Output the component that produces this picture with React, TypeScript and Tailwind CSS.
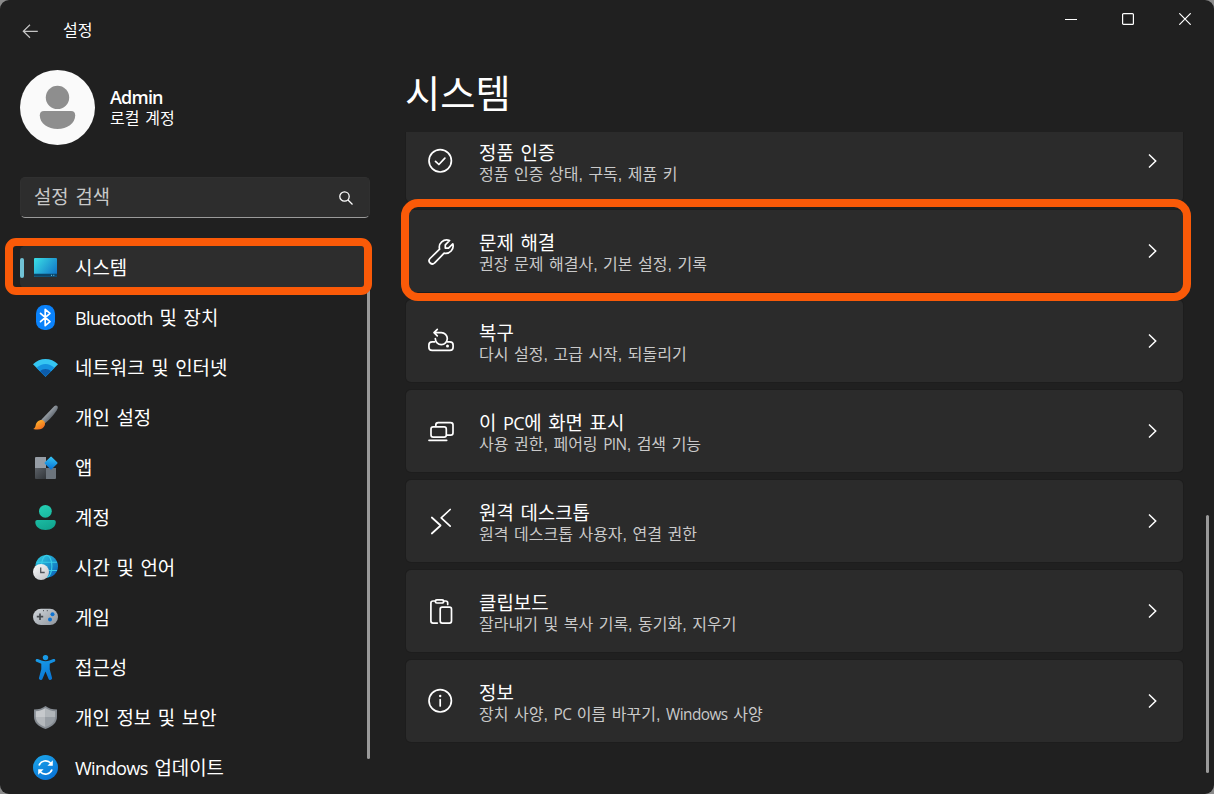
import type { ReactNode } from 'react';
import clsx from 'clsx';

interface NavItem {
  label: string;
  icon: ReactNode;
  active?: boolean;
}

interface SettingItem {
  title: string;
  description: string;
  icon: ReactNode;
  highlighted?: boolean;
}

// Latin letters run wide next to Hangul, so they get their own font and tracking
const MixedText = ({ children }: { children: string }) => (
  <>
    {children.split(/([A-Za-z]+)/).map((part, index) =>
      /^[A-Za-z]+$/.test(part) ? (
        <span
          key={index}
          className="font-['Open_Sans','Noto_Sans',sans-serif] text-[0.96em] leading-none tracking-[-0.034em]"
        >
          {part}
        </span>
      ) : (
        part
      )
    )}
  </>
);

const NavIcon = ({ children }: { children: ReactNode }) => (
  <svg className="w-[27px] h-[27px] shrink-0" viewBox="0 0 27 27" fill="none">
    {children}
  </svg>
);

const LineIcon = ({ children }: { children: ReactNode }) => (
  <svg
    className="w-[30px] h-[30px] shrink-0"
    viewBox="0 0 30 30"
    fill="none"
    stroke="#fff"
    strokeWidth="1.7"
    strokeLinecap="round"
    strokeLinejoin="round"
  >
    {children}
  </svg>
);

const navItems: NavItem[] = [
  {
    label: '시스템',
    active: true,
    icon: (
      <NavIcon>
        <defs>
          <linearGradient id="screen" x1="2" y1="4" x2="25" y2="22" gradientUnits="userSpaceOnUse">
            <stop stopColor="#3be0e6" />
            <stop offset="1" stopColor="#0f6fc5" />
          </linearGradient>
        </defs>
        <rect x="2" y="4" width="23" height="18.7" rx="1" fill="url(#screen)" />
        <path d="M2 19.8h23v2a1 1 0 0 1-1 1H3a1 1 0 0 1-1-1z" fill="#0b4467" />
        <path d="M19 21.3h1M21.3 21.3h1" stroke="#6fd0ef" />
      </NavIcon>
    )
  },
  {
    label: 'Bluetooth 및 장치',
    icon: (
      <NavIcon>
        <rect x="4" y="1" width="19" height="25" rx="8.5" fill="#0a82fb" />
        <path d="M8.500 9.300l9.500 8.400-4.800 4V5.300l4.800 4-9.500 8.400" stroke="#fff" strokeWidth="1.7" strokeLinejoin="round" strokeLinecap="round" />
      </NavIcon>
    )
  },
  {
    label: '네트워크 및 인터넷',
    icon: (
      <NavIcon>
        <path d="M1 10.300C8 3.300 19 3.300 26 10.300L13.500 22.700z" fill="#35c6f2" />
        <path d="M4.600 13.900C9.800 8.700 17.200 8.700 22.400 13.900L13.500 22.700z" fill="#1492df" />
        <path d="M8 17.300C11 14.300 16 14.300 19 17.300L13.500 22.700z" fill="#0c5cab" />
      </NavIcon>
    )
  },
  {
    label: '개인 설정',
    icon: (
      <NavIcon>
        <defs>
          <linearGradient id="handle" x1="12" y1="8" x2="20" y2="15" gradientUnits="userSpaceOnUse">
            <stop stopColor="#b4bac0" />
            <stop offset="1" stopColor="#59616a" />
          </linearGradient>
          <linearGradient id="bristle" x1="5" y1="16" x2="11" y2="26" gradientUnits="userSpaceOnUse">
            <stop stopColor="#ffb82e" />
            <stop offset="1" stopColor="#ee611a" />
          </linearGradient>
        </defs>
        <path d="M9.300 15.800L22.200 2.200C24 .5 26.600 2 25.600 4.500 23.800 8.600 18 15.200 12.800 19.600z" fill="url(#handle)" />
        <path d="M8 16.300c2.800-1.200 6 1.600 4.800 4.900C11.400 25 7.500 26.400 1.200 25c2.600-1 2-3.200 3-5.400.7-1.700 2-2.700 3.800-3.300z" fill="url(#bristle)" />
      </NavIcon>
    )
  },
  {
    label: '앱',
    icon: (
      <NavIcon>
        <defs>
          <linearGradient id="diamond" x1="15" y1="4" x2="23" y2="14" gradientUnits="userSpaceOnUse">
            <stop stopColor="#35c5f5" />
            <stop offset="1" stopColor="#0872d4" />
          </linearGradient>
          <linearGradient id="tile" x1="3" y1="14" x2="13" y2="25" gradientUnits="userSpaceOnUse">
            <stop stopColor="#5b6066" />
            <stop offset="1" stopColor="#34383c" />
          </linearGradient>
        </defs>
        <path d="M4 3h10v11H3V4a1 1 0 0 1 1-1z" fill="#969da5" />
        <path d="M3 14h11v11H4a1 1 0 0 1-1-1z" fill="url(#tile)" />
        <path d="M14 14h10v10a1 1 0 0 1-1 1h-9z" fill="#6c747c" />
        <rect x="14.2" y="4.2" width="9.7" height="9.7" rx="1" transform="rotate(45 19.05 9.05)" fill="url(#diamond)" />
      </NavIcon>
    )
  },
  {
    label: '계정',
    icon: (
      <NavIcon>
        <defs>
          <linearGradient id="person" x1="8" y1="1" x2="18" y2="26" gradientUnits="userSpaceOnUse">
            <stop stopColor="#25d0b5" />
            <stop offset="1" stopColor="#10a38d" />
          </linearGradient>
        </defs>
        <circle cx="13.4" cy="7.3" r="6.4" fill="url(#person)" />
        <path d="M5.200 16h16.600c1.200 0 2 .8 2 2 0 4.800-4.500 8-10.300 8S3.300 22.800 3.300 18c0-1.200.8-2 1.900-2z" fill="url(#person)" />
      </NavIcon>
    )
  },
  {
    label: '시간 및 언어',
    icon: (
      <NavIcon>
        <defs>
          <linearGradient id="globe" x1="7" y1="3" x2="24" y2="22" gradientUnits="userSpaceOnUse">
            <stop stopColor="#2dc3dc" />
            <stop offset="1" stopColor="#0b65bd" />
          </linearGradient>
          <linearGradient id="clock" x1="3" y1="11" x2="14" y2="26" gradientUnits="userSpaceOnUse">
            <stop stopColor="#f7f7f8" />
            <stop offset="1" stopColor="#c3c5c9" />
          </linearGradient>
        </defs>
        <circle cx="14.7" cy="12.3" r="11.3" fill="url(#globe)" />
        <path d="M4.500 8.300h20.500M4.500 16.500h20.500" stroke="#39cde8" strokeWidth="1.1" />
        <ellipse cx="14.7" cy="12.3" rx="5.2" ry="11" stroke="#39cde8" strokeWidth="1.1" />
        <circle cx="9" cy="18" r="8" fill="url(#clock)" />
        <path d="M8.700 13.500v5h4" stroke="#50545a" strokeWidth="1.3" />
      </NavIcon>
    )
  },
  {
    label: '게임',
    icon: (
      <NavIcon>
        <defs>
          <linearGradient id="pad" x1="5" y1="5" x2="18" y2="23" gradientUnits="userSpaceOnUse">
            <stop stopColor="#ccd1d6" />
            <stop offset="1" stopColor="#959ba2" />
          </linearGradient>
        </defs>
        <rect x="1" y="4.8" width="25" height="16.3" rx="8" fill="url(#pad)" />
        <path d="M8 9.500v6.400M4.800 12.700h6.400" stroke="#44484d" strokeWidth="1.7" />
        <circle cx="20.5" cy="10.3" r="2" fill="#0c72d2" />
        <circle cx="18" cy="15.5" r="2" fill="#0c72d2" />
        <path d="M11 6.700h1M14.800 6.700h1" stroke="#44484d" />
      </NavIcon>
    )
  },
  {
    label: '접근성',
    icon: (
      <NavIcon>
        <defs>
          <linearGradient id="figure" x1="8" y1="1" x2="18" y2="26" gradientUnits="userSpaceOnUse">
            <stop stopColor="#1ba1ea" />
            <stop offset="1" stopColor="#0874d4" />
          </linearGradient>
        </defs>
        <circle cx="13.5" cy="3.6" r="2.7" fill="url(#figure)" />
        <path d="M5.700 5c2.600 1 5 2.200 7.800 2.200S18.700 6 21.300 5c1.900-.7 2.900 1.900 1.100 2.700l-4.700 2.100v5.400l2.300 8.600c.6 2.200-2.600 3.100-3.400 1.100l-3.100-7.500-3.100 7.500c-.8 2-4 1.100-3.400-1.100l2.300-8.600V9.800L4.600 7.700C2.800 6.900 3.800 4.300 5.700 5z" fill="url(#figure)" />
      </NavIcon>
    )
  },
  {
    label: '개인 정보 및 보안',
    icon: (
      <NavIcon>
        <path d="M13.500 2c3.100 2.500 6.700 3.500 11.500 3.600v7c0 5.900-4 10-11.500 12.500C6 22.600 2 18.500 2 12.600v-7C6.800 5.500 10.400 4.500 13.500 2z" fill="#858b92" />
        <path d="M13.500 4c2.800 2 6 3 9.700 3.200v5.900h-9.700z" fill="#b1b6ba" />
        <path d="M13.500 4c-2.800 2-6 3-9.700 3.200v5.900h9.700z" fill="#c6c9cc" />
        <path d="M3.800 13.100h9.700v10C7.500 21 4 17.800 3.800 13.100z" fill="#b4b8bc" />
        <path d="M23.200 13.100h-9.700v10c6-2.100 9.500-5.300 9.700-10z" fill="#999fa5" />
      </NavIcon>
    )
  },
  {
    label: 'Windows 업데이트',
    icon: (
      <NavIcon>
        <defs>
          <linearGradient id="update" x1="6" y1="2" x2="20" y2="26" gradientUnits="userSpaceOnUse">
            <stop stopColor="#1ba2e8" />
            <stop offset="1" stopColor="#0872d6" />
          </linearGradient>
        </defs>
        <circle cx="13.5" cy="13.5" r="12.5" fill="url(#update)" />
        <path d="M7 11.500a7 7 0 0 1 11.800-2.300M20 15.500a7 7 0 0 1-11.800 2.300" stroke="#fff" strokeWidth="1.7" />
        <path d="M20.800 6.300v5.400h-5.400zM6.200 20.700v-5.400h5.400z" fill="#fff" />
      </NavIcon>
    )
  }
];

const settingItems: SettingItem[] = [
  {
    title: '정품 인증',
    description: '정품 인증 상태, 구독, 제품 키',
    icon: (
      <LineIcon>
        <circle cx="15.2" cy="14.8" r="11.2" />
        <path d="M10.500 15.300l3.400 3.200 6-6.300" />
      </LineIcon>
    )
  },
  {
    title: '문제 해결',
    description: '권장 문제 해결사, 기본 설정, 기록',
    highlighted: true,
    icon: (
      <LineIcon>
        <path d="M24.600 4.500l-4.300 4.400v3.200h3.200l4.300-4.300c1.600 5.400-3.100 10.600-8.700 9.400l-9.400 9.600a3.100 3.100 0 0 1-4.700-4.300l9.600-9.300C13 7.300 18.500 2.400 24.600 4.500z" />
      </LineIcon>
    )
  },
  {
    title: '복구',
    description: '다시 설정, 고급 시작, 되돌리기',
    icon: (
      <LineIcon>
        <path d="M9.800 15.800H7.200c-2 0-3.300 1.200-3.300 3.200v2.300c0 1.900 1.200 3.100 3.200 3.100h17.800c2 0 3.200-1.200 3.200-3.100V19c0-2-1.300-3.200-3.300-3.200h-2.600" />
        <path d="M9 6.600h7.300a6 6 0 1 1-6 6M12.300 3.400L9 6.600l3.300 3.300" />
        <circle cx="22.5" cy="20" r="1.5" fill="#fff" stroke="none" />
      </LineIcon>
    )
  },
  {
    title: '이 PC에 화면 표시',
    description: '사용 권한, 페어링 PIN, 검색 기능',
    icon: (
      <LineIcon>
        <path d="M10.800 10V9c0-1.400 1-2.400 2.400-2.400h12.400c1.400 0 2.400 1 2.400 2.400v7.700c0 1.400-1 2.400-2.400 2.400H22" />
        <rect x="6" y="10.8" width="15.3" height="10.4" rx="2.2" />
        <path d="M4 24.300h17.700" />
      </LineIcon>
    )
  },
  {
    title: '원격 데스크톱',
    description: '원격 데스크톱 사용자, 연결 권한',
    icon: (
      <LineIcon>
        <path d="M6.800 11.500l8.800 8-8.800 8M25.200 3.500l-9 8.300 9 8.400" />
      </LineIcon>
    )
  },
  {
    title: '클립보드',
    description: '잘라내기 및 복사 기록, 동기화, 지우기',
    icon: (
      <LineIcon>
        <path d="M10.500 5H8C6.700 5 5.900 5.800 5.900 7v18.100c0 1.200.8 2 2.100 2h4.300M18.500 5h2.200c1.200 0 2 .8 2 2v1.500" />
        <rect x="10.3" y="3.8" width="8.4" height="3.2" rx="1.6" />
        <rect x="15.2" y="11.2" width="11.3" height="15.9" rx="2" />
      </LineIcon>
    )
  },
  {
    title: '정보',
    description: '장치 사양, PC 이름 바꾸기, Windows 사양',
    icon: (
      <LineIcon>
        <circle cx="15.2" cy="14.8" r="11.2" />
        <path d="M15.200 13.700v6.300" />
        <circle cx="15.2" cy="10" r="1.2" fill="#fff" stroke="none" />
      </LineIcon>
    )
  }
];

const Sidebar = () => (
  <aside className="w-[406px] shrink-0 flex flex-col">
    {/* Title bar */}
    <div className="h-[61px] flex items-center pl-[22px] gap-[25px]">
      <svg className="w-4 h-4" viewBox="0 0 16 16" fill="none" stroke="#c4c4c4" strokeWidth="1.2">
        <path d="M8 1.800L1.300 8.300 8 14.800M1.300 8.300H15.800" />
      </svg>
      <span className="text-[16px]">설정</span>
    </div>

    {/* Account */}
    <div className="h-[75px] mt-[9px] pl-5 flex items-center gap-[15px]">
      <svg className="w-[75px] h-[75px]" viewBox="0 0 75 75" fill="#8e8e8e">
        <circle cx="37.5" cy="37.5" r="37.5" fill="#fafafa" />
        <circle cx="37.5" cy="27.4" r="11.7" />
        <path d="M24 41h27c2.700 0 4.200 1.600 4.200 4.200C55.200 53.500 47 59 37.500 59s-17.700-5.500-17.700-13.800c0-2.600 1.500-4.200 4.200-4.200z" />
      </svg>
      <div className="flex flex-col pt-px">
        <span className="font-['Open_Sans',sans-serif] font-semibold text-[18px] leading-5 tracking-[-0.8px]">Admin</span>
        <span className="pt-0.5 text-[16px] leading-5 [word-spacing:1.4px]">로컬 계정</span>
      </div>
    </div>

    {/* Search */}
    <div className="w-[350px] h-[41px] mt-8 ml-5 pl-[13px] pr-4 flex items-center justify-between rounded-[5px] bg-[#2d2d2d] border border-[#303030] border-b-[#9a9a9a]">
      <span className="pt-0.5 text-[18.8px] text-[#c8c8c8] [word-spacing:1.6px]">설정 검색</span>
      <svg className="w-[14px] h-[14px]" viewBox="0 0 14 14" fill="none" stroke="#fff" strokeWidth="1.3">
        <circle cx="5.5" cy="5.5" r="4.7" />
        <path d="M9 9l4.500 4.500" />
      </svg>
    </div>

    <div className="flex mt-7">
      <nav className="w-[346px] ml-5 shrink-0 flex flex-col gap-2">
        {navItems.map((item) => (
          <div
            key={item.label}
            className={clsx('relative h-[42px] flex items-center pl-3 gap-4 rounded-[5px]', item.active && 'bg-[#2d2d2d]')}
          >
            {item.active && <div className="absolute left-0 top-3 w-1 h-5 rounded-full bg-[#71c3d6]" />}
            {item.icon}
            <span className="pt-[3px] text-[18.9px] leading-6 whitespace-nowrap [word-spacing:1.4px]">
              <MixedText>{item.label}</MixedText>
            </span>
            {item.active && (
              <div className="absolute z-10 -left-[15px] -top-2 w-[367px] h-[57px] border-8 border-[#fa5a08] rounded-[11px]" />
            )}
          </div>
        ))}
      </nav>
      <div className="w-[3px] h-[513px] ml-[1px] rounded-full bg-[#9a9a9a]" />
    </div>
  </aside>
);

const SettingCard = ({ item }: { item: SettingItem }) => (
  <div className="relative h-[82px] shrink-0 flex items-center pl-[19px] pr-[26px] rounded-[5px] bg-[#2b2b2b] shadow-[0_0_0_1px_#1d1d1d]">
    {item.icon}
    <div className="flex flex-col ml-6 mt-1 whitespace-nowrap">
      <span className="text-[18.9px] leading-6 [word-spacing:1.4px]">
        <MixedText>{item.title}</MixedText>
      </span>
      <span className="text-[16px] leading-[18px] text-[#c9c9c9] [word-spacing:1.1px]">
        <MixedText>{item.description}</MixedText>
      </span>
    </div>
    <svg className="w-[10px] h-4 ml-auto" viewBox="0 0 10 16" fill="none" stroke="#fff" strokeWidth="1.5">
      <path d="M2 1.500L8.700 8l-6.700 6.500" />
    </svg>
    {item.highlighted && (
      <div className="absolute z-10 -left-[5px] -top-[11px] w-[790px] h-[102px] border-8 border-[#fa5a08] rounded-[17px]" />
    )}
  </div>
);

export default function App() {
  return (
    <div className="w-[1214px] h-[794px] overflow-hidden bg-[#8b8b8b]">
      <div className="w-full h-full flex overflow-hidden rounded-[9px] bg-[#202020] text-white font-['Liberation_Sans','Noto_Sans_CJK_KR',sans-serif]">
        <Sidebar />

        <main className="flex-1 min-w-0 flex flex-col">
          {/* Window controls */}
          <div className="h-[37px] shrink-0 flex items-center justify-end pr-[23px] gap-[45px]">
            <svg className="w-3 h-3" viewBox="0 0 12 12" stroke="#fff" strokeWidth="1.2">
              <path d="M0 6.500h12" />
            </svg>
            <svg className="w-3 h-3" viewBox="0 0 12 12" fill="none" stroke="#fff" strokeWidth="1.2">
              <rect x=".6" y=".6" width="10.8" height="10.8" rx="1" />
            </svg>
            <svg className="w-3 h-3" viewBox="0 0 12 12" stroke="#fff" strokeWidth="1.2">
              <path d="M.3 .3l11.400 11.400M11.700 .3L.3 11.700" />
            </svg>
          </div>

          <h1 className="h-[95px] shrink-0 pt-[33px] -ml-px text-[38.3px] leading-[50px] whitespace-nowrap">시스템</h1>

          <div className="flex-1 min-h-0 flex">
            {/* Scrolled list, the first card is cut at its top edge */}
            <div className="w-[777px] shrink-0 [clip-path:inset(0_-20px_0_-20px)]">
              <div className="flex flex-col gap-2 -mt-3">
                {settingItems.map((item) => (
                  <SettingCard key={item.title} item={item} />
                ))}
              </div>
            </div>
            <div className="w-[3px] h-[258px] mt-[383px] ml-[23px] rounded-full bg-[#9a9a9a]" />
          </div>
        </main>
      </div>
    </div>
  );
}
